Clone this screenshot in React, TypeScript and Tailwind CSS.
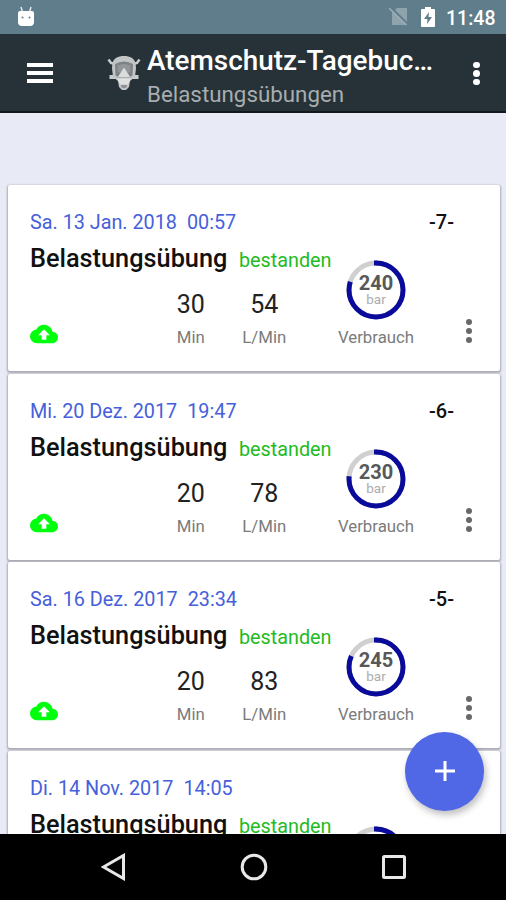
type Exercise = {
    date: string;
    time: string;
    number: number;
    minutes: number;
    rate: number;
    pressure: number;
};

const exercises: Exercise[] = [
    { date: 'Sa. 13 Jan. 2018', time: '00:57', number: 7, minutes: 30, rate: 54, pressure: 240 },
    { date: 'Mi. 20 Dez. 2017', time: '19:47', number: 6, minutes: 20, rate: 78, pressure: 230 },
    { date: 'Sa. 16 Dez. 2017', time: '23:34', number: 5, minutes: 20, rate: 83, pressure: 245 },
    { date: 'Di. 14 Nov. 2017', time: '14:05', number: 4, minutes: 20, rate: 80, pressure: 240 },
];

const MAX_PRESSURE = 300;

function MaskLogo() {
    return (
        <svg width="34" height="36" viewBox="0 0 34 36" className="shrink-0">
            <path d="M1.500 4.500l2.500 3.500 4 1M32.500 4.500L30 8l-4 1" stroke="#c9cccd" strokeWidth="2.500" fill="none" />
            <path d="M2.500 22h8M31.500 22h-8" stroke="#c9cccd" strokeWidth="4" fill="none" />
            <path
                d="M17 1C11 1 6.500 3.500 5.500 8L5 13l1 9 5 4 1 6 3 3h4l3-3 1-6 5-4 1-9-.5-5C27.500 3.500 23 1 17 1z"
                fill="#c2c5c6"
            />
            <path d="M8 9q9-5 18 0l-.5 11-3 3h-11l-3-3z" fill="#7d8284" />
            <path d="M10.500 10.500q6.500-3 13 0v7H10.500z" fill="#929698" />
            <path d="M17 12.500l6.500 10h-13z" fill="#dadcdc" />
            <path d="M10 23.500h14l-3 6h-8z" fill="#dfe1e1" />
            <path d="M14 30h6l-1 3h-4z" fill="#8e9294" />
        </svg>
    );
}

function StatusBar() {
    return (
        <div className="flex h-[34px] shrink-0 items-center bg-[#607d8b] pr-[10px] pl-[17px] text-white">
            <svg width="18" height="21" viewBox="0 0 18 21" className="mb-[2px]">
                <path d="M4 1l1.500 5M14 1l-1.500 5" stroke="#e5eaec" strokeWidth="1.500" />
                <path d="M1 7q0-2 2-2h12q2 0 2 2v9q0 4-4 4H5q-4 0-4-4z" fill="#fff" />
                <circle cx="5.500" cy="11.500" r="1" fill="#607d8b" />
                <circle cx="12.500" cy="11.500" r="1" fill="#607d8b" />
            </svg>
            <svg width="20" height="20" viewBox="0 0 20 20" className="ml-auto">
                <path d="M8 1h10v17H3V6z" fill="#8fa3ad" />
                <path d="M1 0l18 18" stroke="#607d8b" strokeWidth="3" />
                <path d="M0 1l17.500 17" stroke="#a0b1b9" strokeWidth="1.400" />
            </svg>
            <svg width="14" height="22" viewBox="0 0 14 22" className="ml-[12px]">
                <path d="M4 1h6v2h3q1 0 1 1v16q0 1-1 1H1q-1 0-1-1V4q0-1 1-1h3z" fill="#fff" />
                <path d="M8 6l-5 7h3.500L6 18l5-7H7.500z" fill="#607d8b" />
            </svg>
            <span className="ml-[11px] w-[50px] pt-[3px] text-[19.500px] leading-[31px] font-medium whitespace-nowrap">
                11:48
            </span>
        </div>
    );
}

function AppBar() {
    return (
        <header className="flex h-[79px] shrink-0 items-center border-b-2 border-[#11191d] bg-[#263238] pl-[27px]">
            <div className="flex w-[26px] flex-col gap-[4px]">
                <span className="h-[4px] bg-white" />
                <span className="h-[4px] bg-white" />
                <span className="h-[4px] bg-white" />
            </div>
            <div className="ml-[54px]">
                <MaskLogo />
            </div>
            <div className="ml-[6px] w-[300px] pt-[10px] whitespace-nowrap">
                <h1 className="text-[27.900px] leading-[34px] font-medium text-white">
                    Atemschutz-Tagebuc…
                </h1>
                <p className="text-[22.350px] leading-[33px] text-[#a8adaf]">Belastungsübungen</p>
            </div>
            <div className="ml-[26px] flex flex-col gap-[2px] pt-[2px]">
                <span className="size-[6.500px] rounded-full bg-white" />
                <span className="size-[6.500px] rounded-full bg-white" />
                <span className="size-[6.500px] rounded-full bg-white" />
            </div>
        </header>
    );
}

function PressureRing({ value }: { value: number }) {
    const length = (value / MAX_PRESSURE) * 100;

    return (
        <div className="grid size-[60px] place-items-center">
            <svg viewBox="0 0 60 60" className="col-start-1 row-start-1 size-[60px] -rotate-90">
                <circle cx="30" cy="30" r="27" fill="none" stroke="#d0d0d0" strokeWidth="5" />
                <circle
                    cx="30"
                    cy="30"
                    r="27"
                    fill="none"
                    stroke="#0b0b9b"
                    strokeWidth="5"
                    pathLength="100"
                    strokeDasharray={`${length} 100`}
                />
                <path d="M57 30.500v-2.500" stroke="#0b0b9b" strokeWidth="5" />
            </svg>
            <div className="col-start-1 row-start-1 pb-[2px] text-center">
                <p className="text-[20px] leading-[20px] font-bold text-[#585858]">{value}</p>
                <p className="text-[13.500px] leading-[12px] text-[#adadad]">bar</p>
            </div>
        </div>
    );
}

function Stat({ value, label }: { value: number; label: string }) {
    return (
        <div className="w-[73.500px] text-center">
            <p className="text-[25px] leading-[34px] text-[#222]">{value}</p>
            <p className="text-[16.800px] leading-[30px] text-[#7b7b7b]">{label}</p>
        </div>
    );
}

function ExerciseCard({ item }: { item: Exercise }) {
    return (
        <article className="flex h-[186px] shrink-0 rounded-[2px] bg-white shadow-[0_1px_2px_1px_#aaaab4]">
            <div className="w-[330px] pt-[22px] pl-[22px] whitespace-nowrap">
                <p className="text-[19.800px] leading-[32px] text-[#4660db]">
                    {item.date}
                    <span className="ml-[10px]">{item.time}</span>
                </p>
                <div className="flex items-baseline">
                    <h2 className="w-[209px] text-[25.300px] leading-[40px] font-medium text-[#111]">
                        Belastungsübung
                    </h2>
                    <span className="text-[19.800px] text-[#1fbb1f]">bestanden</span>
                </div>
                <div className="flex items-end pt-[9px]">
                    <svg width="28" height="20" viewBox="0 4 24 16" className="mb-[8px]">
                        <path
                            d="M19.350 10.040A7.490 7.490 0 0 0 12 4C9.110 4 6.600 5.640 5.350 8.040A5.994 5.994 0 0 0 0 14c0 3.310 2.690 6 6 6h13c2.760 0 5-2.240 5-5 0-2.640-2.050-4.780-4.650-4.960zM14 13v4h-4v-4H7l5-5 5 5h-3z"
                            fill="#00ff0c"
                        />
                    </svg>
                    <div className="ml-[96px] flex">
                        <Stat value={item.minutes} label="Min" />
                        <Stat value={item.rate} label="L/Min" />
                    </div>
                </div>
            </div>
            <div className="flex w-[76px] flex-col items-center pt-[75px]">
                <PressureRing value={item.pressure} />
                <p className="pt-px text-[16.800px] leading-[33px] text-[#7b7b7b]">Verbrauch</p>
            </div>
            <div className="flex flex-1 flex-col pt-[21px]">
                <p className="w-[55px] text-center text-[20px] leading-[32px] font-medium text-[#111]">
                    -{item.number}-
                </p>
                <div className="mt-[81px] ml-[52px] flex flex-col gap-[3px]">
                    <span className="size-[6px] rounded-full bg-[#686868]" />
                    <span className="size-[6px] rounded-full bg-[#686868]" />
                    <span className="size-[6px] rounded-full bg-[#686868]" />
                </div>
            </div>
        </article>
    );
}

function NavigationBar() {
    return (
        <nav className="flex h-[66px] shrink-0 items-center bg-black pl-[101px]">
            <svg width="25" height="28" viewBox="0 0 25 28">
                <path d="M22.500 2.500v23L2.500 14z" fill="none" stroke="#e8e8e8" strokeWidth="3" />
            </svg>
            <svg width="28" height="28" viewBox="0 0 28 28" className="ml-[114px]">
                <circle cx="14" cy="14" r="11.800" fill="none" stroke="#e8e8e8" strokeWidth="3" />
            </svg>
            <svg width="24" height="24" viewBox="0 0 24 24" className="ml-[114px]">
                <rect x="1.500" y="1.500" width="21" height="21" rx="1" fill="none" stroke="#e8e8e8" strokeWidth="3" />
            </svg>
        </nav>
    );
}

export default function App() {
    return (
        <div className="relative flex h-[900px] w-[506px] flex-col overflow-hidden bg-[#e8eaf6] font-[Roboto,sans-serif]">
            <StatusBar />
            <AppBar />
            <main className="flex min-h-0 flex-1 flex-col gap-[2.500px] overflow-hidden pt-[72px] pr-[6px] pl-[8px]">
                {exercises.map((item) => (
                    <ExerciseCard key={item.number} item={item} />
                ))}
            </main>
            <NavigationBar />
            <button
                aria-label="Neue Übung"
                className="absolute top-[731.500px] left-[405px] grid size-[79px] place-items-center rounded-full bg-[#5068e6] shadow-[2px_4px_7px_rgba(0,0,0,0.25)]"
            >
                <svg width="22" height="22" viewBox="0 0 22 22">
                    <path d="M11 1v20M1 11h20" stroke="#fff" strokeWidth="3" />
                </svg>
            </button>
        </div>
    );
}
